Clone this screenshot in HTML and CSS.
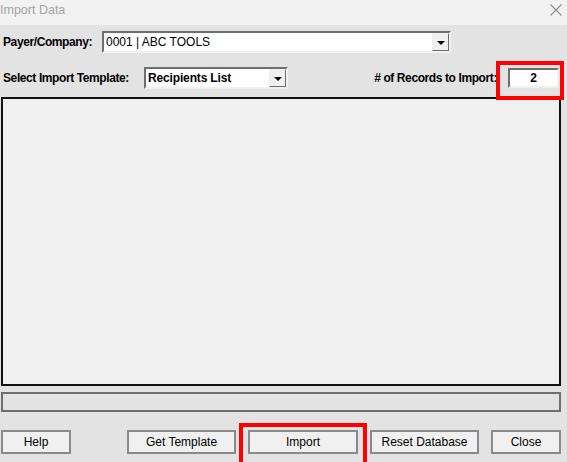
FILE: index.html
```html
<!DOCTYPE html>
<html lang="en">
<head>
  <meta charset="UTF-8" />
  <title>Import Data</title>
  <link rel="stylesheet" href="styles.css">
</head>
<body>
  <div class="window">
    <div class="titlebar">
      <span class="title">Import Data</span>
      <svg class="close-x" width="12" height="12" viewBox="0 0 12 12">
        <path d="M0.5 0.5 L11.5 11.5 M11.5 0.5 L0.5 11.5" stroke="#8f8f8f" stroke-width="1.1" fill="none"/>
      </svg>
    </div>

    <div class="content">
      <!-- Payer row -->
      <div class="row row-payer">
        <label class="lbl lbl-payer">Payer/Company:</label>
        <div class="combo combo-payer">
          <span class="combo-text">0001 | ABC TOOLS</span>
          <span class="combo-btn"><span class="arrow"></span></span>
        </div>
      </div>

      <!-- Template row -->
      <div class="row row-template">
        <label class="lbl lbl-template">Select Import Template:</label>
        <div class="combo combo-template">
          <span class="combo-text bold">Recipients List</span>
          <span class="combo-btn"><span class="arrow"></span></span>
        </div>
        <label class="lbl lbl-records">#&nbsp;of Records to Import:</label>
        <div class="textbox">2</div>
      </div>

      <div class="listbox"></div>
      <div class="progress"></div>

      <div class="buttons">
        <button class="btn btn-help">Help</button>
        <button class="btn btn-wide">Get Template</button>
        <button class="btn btn-import">Import</button>
        <button class="btn btn-wide">Reset Database</button>
        <button class="btn btn-close">Close</button>
      </div>
    </div>

    <!-- red annotation boxes -->
    <div class="mark mark-records"></div>
    <div class="mark mark-import"></div>
  </div>
</body>
</html>
```

FILE: styles.css
```css
html, body {
  margin: 0;
  padding: 0;
}
body {
  font-family: "Liberation Sans", Arial, sans-serif;
  font-size: 12px;
  color: #000;
  background: #e3e3e3;
}
.window {
  position: relative;
  width: 567px;
  height: 462px;
  overflow: hidden;
  background: #e3e3e3;
}
.titlebar {
  height: 25px;
  background: #f2f2f2;
  display: flex;
  align-items: center;
  justify-content: space-between;
  padding-right: 5px;
}
.title {
  color: #a3a3a3;
  font-size: 12.5px;
  margin-top: -5px;
}
.close-x {
  margin-top: -6px;
}
.content {
  padding: 6px 0 0 1px;
}
.row {
  display: flex;
  align-items: center;
  height: 22px;
}
.row-template {
  margin-top: 14px;
}
.lbl {
  font-weight: bold;
  white-space: nowrap;
  letter-spacing: -0.4px;
}
.lbl-payer {
  width: 99px;
  padding-left: 2px;
}
.lbl-template {
  width: 141px;
  padding-left: 2px;
}
.lbl-records {
  margin-left: auto;
  margin-right: 11px;
}
.bold {
  font-weight: bold;
  letter-spacing: -0.15px;
}
.combo {
  display: flex;
  box-sizing: border-box;
  height: 22px;
  background: #fff;
  border: 2px solid;
  border-color: #6e6e6e #f0f0f0 #f0f0f0 #6e6e6e;
}
.combo-payer {
  width: 349px;
}
.combo-template {
  width: 144px;
}
.combo-text {
  flex: 1;
  padding-left: 2px;
  line-height: 18px;
  white-space: nowrap;
  overflow: hidden;
}
.combo-btn {
  box-sizing: border-box;
  width: 17px;
  height: 18px;
  background: #f0f0f0;
  border: 1px solid;
  border-color: #f0f0f0 #6e6e6e #6e6e6e #f0f0f0;
  display: flex;
  align-items: center;
  justify-content: center;
}
.arrow {
  width: 0;
  height: 0;
  border-left: 4px solid transparent;
  border-right: 4px solid transparent;
  border-top: 4px solid #000;
  margin-top: 1px;
}
.textbox {
  box-sizing: border-box;
  width: 51px;
  height: 20px;
  margin-right: 8px;
  background: #fff;
  border: 2px solid;
  border-color: #6e6e6e #f0f0f0 #f0f0f0 #6e6e6e;
  text-align: center;
  font-weight: bold;
  line-height: 16px;
}
.listbox {
  box-sizing: border-box;
  width: 560px;
  height: 289px;
  margin-top: 8px;
  background: #f0f0f0;
  border: 2px solid #111;
}
.progress {
  box-sizing: border-box;
  width: 560px;
  height: 20px;
  margin-top: 6px;
  border: 2px solid #6e6e6e;
  background: #e3e3e3;
}
.buttons {
  display: flex;
  gap: 12px;
  margin-top: 18px;
}
.btn {
  box-sizing: border-box;
  height: 24px;
  padding: 0;
  background: #f0f0f0;
  border: 2px solid #8a8a8a;
  font-family: "Liberation Sans", Arial, sans-serif;
  font-size: 12px;
  color: #000;
}
.btn-help {
  width: 70px;
  margin-right: 44px;
}
.btn-close {
  width: 70px;
}
.btn-wide {
  width: 109px;
}
.btn-import {
  width: 110px;
}
.mark {
  position: absolute;
  box-sizing: border-box;
  border: 4px solid #f00;
}
.mark-records {
  left: 496px;
  top: 61px;
  width: 68px;
  height: 39px;
}
.mark-import {
  left: 239px;
  top: 423px;
  width: 128px;
  height: 45px;
}
```
